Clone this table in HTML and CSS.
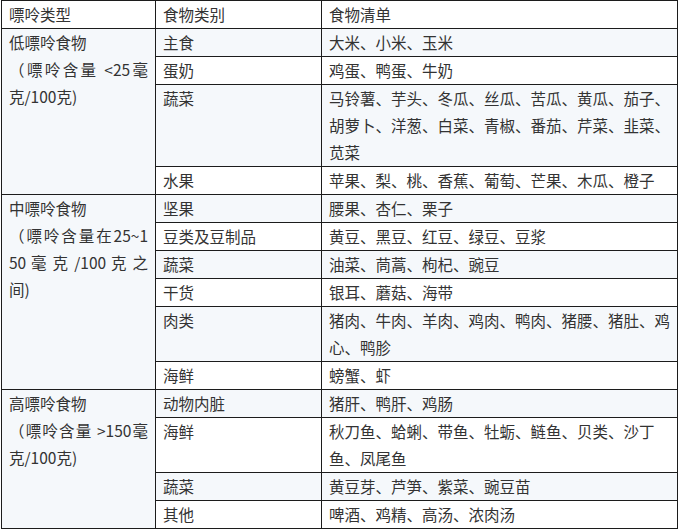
FILE: index.html
```html
<!DOCTYPE html>
<html lang="zh-CN">
<head>
<meta charset="utf-8">
<title>嘌呤食物表</title>
<link rel="stylesheet" href="styles.css">
</head>
<body class="page">
<table class="purine">
  <colgroup>
    <col class="c1">
    <col class="c2">
    <col class="c3">
  </colgroup>
  <tbody>
    <tr class="row">
      <td class="cell">嘌呤类型</td>
      <td class="cell">食物类别</td>
      <td class="cell">食物清单</td>
    </tr>
    <tr class="row">
      <td class="cell type" rowspan="4">
        <span class="ln">低嘌呤食物</span>
        <span class="ln jf">（嘌呤含量 &lt;25毫</span>
        <span class="ln">克/100克)</span>
      </td>
      <td class="cell">主食</td>
      <td class="cell">大米、小米、玉米</td>
    </tr>
    <tr class="row">
      <td class="cell">蛋奶</td>
      <td class="cell">鸡蛋、鸭蛋、牛奶</td>
    </tr>
    <tr class="row">
      <td class="cell">蔬菜</td>
      <td class="cell">马铃薯、芋头、冬瓜、丝瓜、苦瓜、黄瓜、茄子、胡萝卜、洋葱、白菜、青椒、番茄、芹菜、韭菜、苋菜</td>
    </tr>
    <tr class="row">
      <td class="cell">水果</td>
      <td class="cell">苹果、梨、桃、香蕉、葡萄、芒果、木瓜、橙子</td>
    </tr>
    <tr class="row">
      <td class="cell type" rowspan="6">
        <span class="ln">中嘌呤食物</span>
        <span class="ln jf">（嘌呤含量在25~1</span>
        <span class="ln jf">50 毫 克 /100 克 之</span>
        <span class="ln">间)</span>
      </td>
      <td class="cell">坚果</td>
      <td class="cell">腰果、杏仁、栗子</td>
    </tr>
    <tr class="row">
      <td class="cell">豆类及豆制品</td>
      <td class="cell">黄豆、黑豆、红豆、绿豆、豆浆</td>
    </tr>
    <tr class="row">
      <td class="cell">蔬菜</td>
      <td class="cell">油菜、茼蒿、枸杞、豌豆</td>
    </tr>
    <tr class="row">
      <td class="cell">干货</td>
      <td class="cell">银耳、蘑菇、海带</td>
    </tr>
    <tr class="row">
      <td class="cell">肉类</td>
      <td class="cell">猪肉、牛肉、羊肉、鸡肉、鸭肉、猪腰、猪肚、鸡心、鸭胗</td>
    </tr>
    <tr class="row">
      <td class="cell">海鲜</td>
      <td class="cell">螃蟹、虾</td>
    </tr>
    <tr class="row">
      <td class="cell type" rowspan="4">
        <span class="ln">高嘌呤食物</span>
        <span class="ln jf">（嘌呤含量 &gt;150毫</span>
        <span class="ln">克/100克)</span>
      </td>
      <td class="cell">动物内脏</td>
      <td class="cell">猪肝、鸭肝、鸡肠</td>
    </tr>
    <tr class="row">
      <td class="cell">海鲜</td>
      <td class="cell">秋刀鱼、蛤蜊、带鱼、牡蛎、鲢鱼、贝类、沙丁鱼、凤尾鱼</td>
    </tr>
    <tr class="row">
      <td class="cell">蔬菜</td>
      <td class="cell">黄豆芽、芦笋、紫菜、豌豆苗</td>
    </tr>
    <tr class="row">
      <td class="cell">其他</td>
      <td class="cell">啤酒、鸡精、高汤、浓肉汤</td>
    </tr>
  </tbody>
</table>
</body>
</html>
```

FILE: styles.css
```css
html, body {
  margin: 0;
  padding: 0;
  background: #ffffff;
}

.page {
  font-family: "Noto Sans CJK SC", "Noto Sans", "Liberation Sans", sans-serif;
  font-size: 15.5px;
  color: #333333;
}

.purine {
  margin: 0 0 0 1px;
  width: 676px;
  border-collapse: collapse;
  table-layout: fixed;
}

.c1 { width: 154px; }
.c2 { width: 166px; }
.c3 { width: 356px; }

.row:nth-child(even) {
  background: #f5f8fb;
}

.cell {
  border: 1px solid #1c1c1c;
  padding: 0 5px 0 7px;
  line-height: 27px;
  vertical-align: top;
  text-align: left;
}

.type {
  padding-right: 7px;
}

.ln {
  display: block;
  white-space: nowrap;
}

.jf {
  text-align: justify;
  text-align-last: justify;
  white-space: normal;
}
```
